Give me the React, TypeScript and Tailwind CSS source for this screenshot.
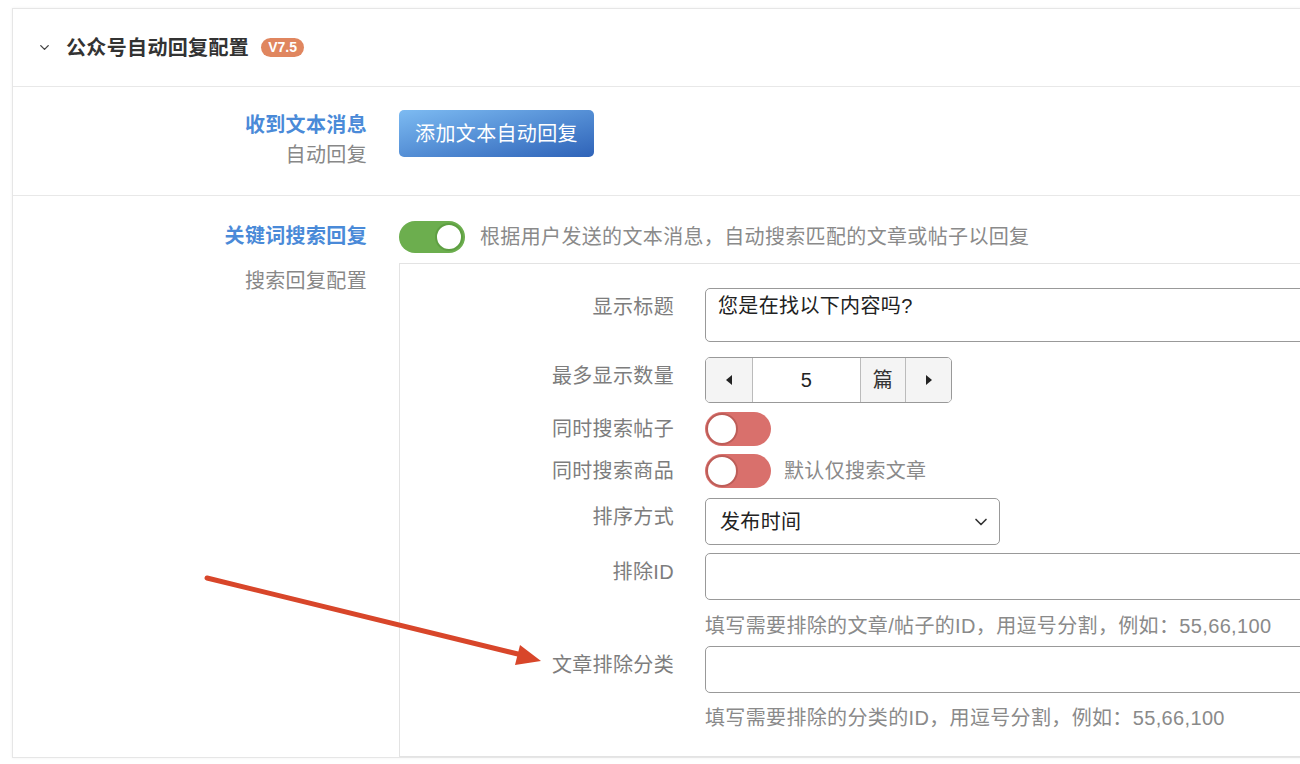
import { ChevronDown } from "lucide-react";

const font = { fontFamily: '"Liberation Sans", "Noto Sans CJK SC", sans-serif' };

function Toggle({ on }: { on: boolean }) {
  if (on) {
    return (
      <div className="flex h-[32px] w-[66px] shrink-0 items-center justify-end rounded-full bg-[#6cae4e] pr-[2px]">
        <div className="h-[28px] w-[28px] rounded-full border-2 border-[#5e9f42] bg-white" />
      </div>
    );
  }
  return (
    <div className="flex h-[34px] w-[66px] shrink-0 items-center rounded-full bg-[#d9706c] pl-[1px]">
      <div className="h-[32px] w-[32px] rounded-full border-2 border-[#bd5d58] bg-white" />
    </div>
  );
}

function Row({ label, align = "top", children }: { label: string; align?: "top" | "center"; children: React.ReactNode }) {
  return (
    <div className={align === "center" ? "flex items-center" : "flex items-start"}>
      <div
        className={
          align === "center"
            ? "w-[274px] shrink-0 text-right leading-[34px] text-[#7d7d7d]"
            : "w-[274px] shrink-0 text-right leading-[38px] text-[#7d7d7d]"
        }
      >
        {label}
      </div>
      <div className="ml-[31px] flex-1">{children}</div>
    </div>
  );
}

export default function App() {
  return (
    <div className="relative h-[764px] w-[1300px] overflow-hidden bg-white text-[20px] tracking-[0.35px]" style={font}>
      <div className="ml-[12px] mt-[8px] w-[1400px] border border-[#e6e6e6] bg-white shadow-[0_0_3px_rgba(0,0,0,0.06)]">
        {/* header */}
        <div className="flex h-[78px] items-center border-b border-[#e8e8e8] pl-[24px]">
          <ChevronDown size={15} strokeWidth={2.2} className="text-[#444]" />
          <span className="ml-[14px] font-bold text-[#333]">公众号自动回复配置</span>
          <span className="ml-[12px] rounded-full bg-[#e0865f] px-[7px] text-[14px] font-bold leading-[19px] tracking-normal text-white">
            V7.5
          </span>
        </div>

        {/* text reply row */}
        <div className="flex h-[109px] border-b border-[#e8e8e8] pt-[23px]">
          <div className="w-[354px] shrink-0 text-right leading-[30px]">
            <div className="font-bold text-[#4a8ad8]">收到文本消息</div>
            <div className="text-[#888]">自动回复</div>
          </div>
          <div className="ml-[32px]">
            <button className="h-[47px] w-[195px] rounded-[5px] bg-linear-to-br from-[#7dbbf2] to-[#2f63b8] text-white">
              添加文本自动回复
            </button>
          </div>
        </div>

        {/* keyword search row */}
        <div className="flex pt-[25px]">
          <div className="w-[354px] shrink-0 text-right">
            <div className="font-bold leading-[30px] text-[#4a8ad8]">关键词搜索回复</div>
            <div className="mt-[15px] leading-[30px] text-[#888]">搜索回复配置</div>
          </div>
          <div className="ml-[32px] flex-1 pr-[40px]">
            <div className="flex h-[32px] items-center gap-[15px]">
              <Toggle on />
              <span className="text-[#8a8a8a]">根据用户发送的文本消息，自动搜索匹配的文章或帖子以回复</span>
            </div>
            <div className="mt-[10px] border border-[#e3e3e3] pb-[23px] pt-[24px]">
              <Row label="显示标题">
                <div className="h-[54px] rounded-[5px] border border-[#999] px-[12px] pt-[2px] leading-[30px] text-[#222]">
                  您是在找以下内容吗?
                </div>
              </Row>

              <div className="mt-[15px]">
                <Row label="最多显示数量">
                  <div className="flex h-[46px] w-[247px] overflow-hidden rounded-[5px] border border-[#999]">
                    <div className="flex w-[47px] items-center justify-center border-r border-[#bbb] bg-[#f4f4f4]">
                      <svg width="8" height="12" viewBox="0 0 8 12"><path d="M7 1 L1 6 L7 11 Z" fill="#222" /></svg>
                    </div>
                    <div className="flex w-[107px] items-center justify-center text-[#222]">5</div>
                    <div className="flex w-[46px] items-center justify-center border-x border-[#bbb] bg-[#f4f4f4] text-[#333]">篇</div>
                    <div className="flex flex-1 items-center justify-center bg-[#f4f4f4]">
                      <svg width="8" height="12" viewBox="0 0 8 12"><path d="M1 1 L7 6 L1 11 Z" fill="#222" /></svg>
                    </div>
                  </div>
                </Row>
              </div>

              <div className="mt-[9px]">
                <Row label="同时搜索帖子" align="center">
                  <Toggle on={false} />
                </Row>
              </div>

              <div className="mt-[8px]">
                <Row label="同时搜索商品" align="center">
                  <div className="flex items-center gap-[13px]">
                    <Toggle on={false} />
                    <span className="text-[#8a8a8a]">默认仅搜索文章</span>
                  </div>
                </Row>
              </div>

              <div className="mt-[10px]">
                <Row label="排序方式">
                  <div className="flex h-[47px] w-[295px] items-center justify-between rounded-[5px] border border-[#999] pl-[14px] pr-[8px] text-[#222]">
                    <span>发布时间</span>
                    <ChevronDown size={20} strokeWidth={2} className="text-[#333]" />
                  </div>
                </Row>
              </div>

              <div className="mt-[8px]">
                <Row label="排除ID">
                  <div className="h-[47px] rounded-[5px] border border-[#999]" />
                  <div className="mt-[11px] leading-[30px] text-[#8a8a8a]">填写需要排除的文章/帖子的ID，用逗号分割，例如：55,66,100</div>
                </Row>
              </div>

              <div className="mt-[5px]">
                <Row label="文章排除分类">
                  <div className="h-[47px] rounded-[5px] border border-[#999]" />
                  <div className="mt-[10px] leading-[30px] text-[#8a8a8a]">填写需要排除的分类的ID，用逗号分割，例如：55,66,100</div>
                </Row>
              </div>
            </div>
          </div>
        </div>
      </div>

      {/* annotation arrow */}
      <svg className="pointer-events-none absolute left-0 top-0" width="1300" height="764">
        <line x1="207" y1="578" x2="522" y2="655" stroke="#d8462a" strokeWidth="5" strokeLinecap="round" />
        <polygon points="541,661 520,645 515,665" fill="#d8462a" />
      </svg>
    </div>
  );
}
